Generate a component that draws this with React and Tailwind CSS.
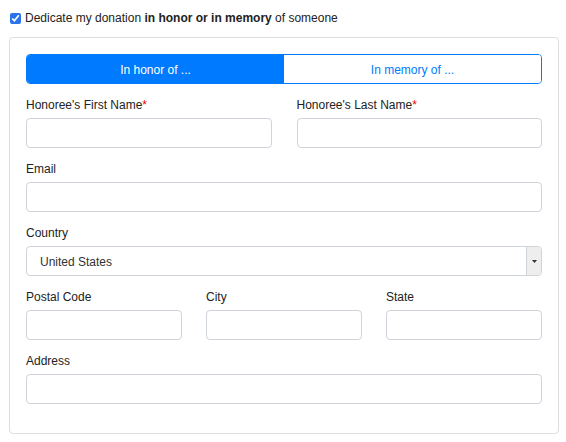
import React from "react";

function Field({ label, required, children }) {
  return (
    <div className="flex flex-col">
      <div className="h-4 text-[12px] leading-[18px] text-[#222] mb-[6px]">
        {label}
        {required && <span className="text-[#e00]">*</span>}
      </div>
      {children}
    </div>
  );
}

function Input() {
  return <div className="h-[30px] rounded-[4px] border border-[#cfd4da] bg-white" />;
}

export default function App() {
  return (
    <div className="w-[566px] h-[442px] bg-white font-['Liberation_Sans',Arial,sans-serif] text-[#222]">
      <div className="flex items-center pl-[10px] pt-[10px] h-[26px]">
        <input type="checkbox" defaultChecked className="w-[11px] h-[11px] m-0 accent-[#2a73e8]" />
        <span className="ml-[4px] text-[12px] leading-4">
          Dedicate my donation <b>in honor or in memory</b> of someone
        </span>
      </div>
      <div className="mt-[11px] ml-[9px] w-[550px] h-[397px] rounded-[4px] border border-[#dedede] px-[16px] pt-[16px]">
        <div className="flex h-[30px] rounded-[4px] border border-[#007bff] overflow-hidden text-[12px] leading-[30px]">
          <div className="flex-1 bg-[#007bff] text-white flex items-center justify-center pt-[2px]">In honor of ...</div>
          <div className="flex-1 bg-white text-[#007bff] flex items-center justify-center pt-[2px]">In memory of ...</div>
        </div>
        <div className="mt-[12px] flex flex-col gap-[12px]">
          <div className="grid grid-cols-2 gap-x-[25px]">
            <Field label="Honoree's First Name" required><Input /></Field>
            <Field label="Honoree's Last Name" required><Input /></Field>
          </div>
          <Field label="Email"><Input /></Field>
          <Field label="Country">
            <div className="h-[30px] rounded-[4px] border border-[#cfd4da] bg-white flex overflow-hidden">
              <div className="flex-1 flex items-center pl-[13px] pt-[2px] text-[12px] text-[#333]">United States</div>
              <div className="w-[15px] bg-[#eeeeee] border-l border-[#cfd4da] flex items-center justify-center">
                <svg width="5" height="3" viewBox="0 0 5 3"><path d="M0 0h5L2.5 3z" fill="#333" /></svg>
              </div>
            </div>
          </Field>
          <div className="grid grid-cols-3 gap-x-[24px]">
            <Field label="Postal Code"><Input /></Field>
            <Field label="City"><Input /></Field>
            <Field label="State"><Input /></Field>
          </div>
          <Field label="Address"><Input /></Field>
        </div>
      </div>
    </div>
  );
}
